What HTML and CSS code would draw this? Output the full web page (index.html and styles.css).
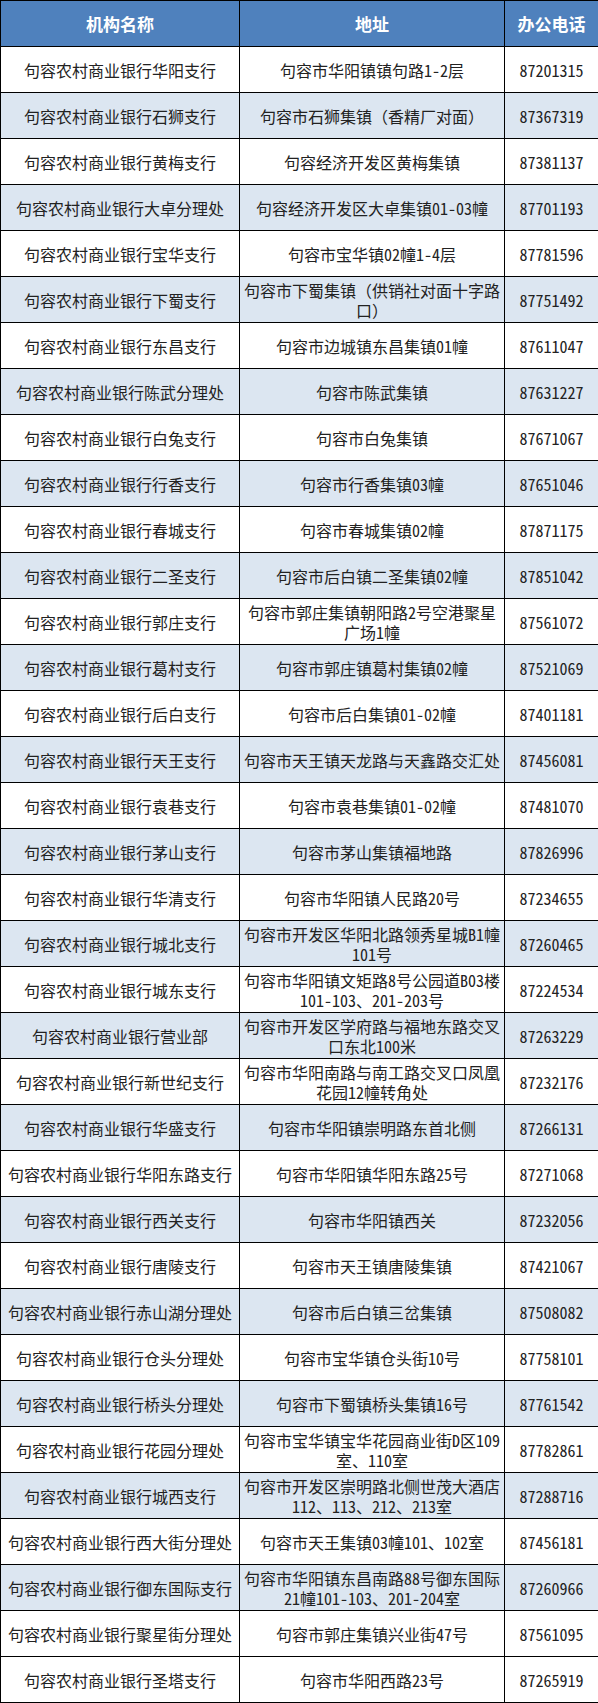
FILE: index.html
```html
<!DOCTYPE html>
<html lang="zh-CN">
<head>
<meta charset="utf-8">
<title>句容农村商业银行网点</title>
<link rel="stylesheet" href="styles.css">
</head>
<body>
<table class="branches">
  <colgroup>
    <col class="c-name">
    <col class="c-addr">
    <col class="c-tel">
  </colgroup>
  <thead>
    <tr><th>机构名称</th><th>地址</th><th>办公电话</th></tr>
  </thead>
  <tbody>
    <tr><td>句容农村商业银行华阳支行</td><td>句容市华阳镇镇句路1-2层</td><td class="tel">87201315</td></tr>
    <tr class="alt"><td>句容农村商业银行石狮支行</td><td>句容市石狮集镇（香精厂对面）</td><td class="tel">87367319</td></tr>
    <tr><td>句容农村商业银行黄梅支行</td><td>句容经济开发区黄梅集镇</td><td class="tel">87381137</td></tr>
    <tr class="alt"><td>句容农村商业银行大卓分理处</td><td>句容经济开发区大卓集镇01-03幢</td><td class="tel">87701193</td></tr>
    <tr><td>句容农村商业银行宝华支行</td><td>句容市宝华镇02幢1-4层</td><td class="tel">87781596</td></tr>
    <tr class="alt"><td>句容农村商业银行下蜀支行</td><td>句容市下蜀集镇（供销社对面十字路<br>口）</td><td class="tel">87751492</td></tr>
    <tr><td>句容农村商业银行东昌支行</td><td>句容市边城镇东昌集镇01幢</td><td class="tel">87611047</td></tr>
    <tr class="alt"><td>句容农村商业银行陈武分理处</td><td>句容市陈武集镇</td><td class="tel">87631227</td></tr>
    <tr><td>句容农村商业银行白兔支行</td><td>句容市白兔集镇</td><td class="tel">87671067</td></tr>
    <tr class="alt"><td>句容农村商业银行行香支行</td><td>句容市行香集镇03幢</td><td class="tel">87651046</td></tr>
    <tr><td>句容农村商业银行春城支行</td><td>句容市春城集镇02幢</td><td class="tel">87871175</td></tr>
    <tr class="alt"><td>句容农村商业银行二圣支行</td><td>句容市后白镇二圣集镇02幢</td><td class="tel">87851042</td></tr>
    <tr><td>句容农村商业银行郭庄支行</td><td>句容市郭庄集镇朝阳路2号空港聚星广场1幢</td><td class="tel">87561072</td></tr>
    <tr class="alt"><td>句容农村商业银行葛村支行</td><td>句容市郭庄镇葛村集镇02幢</td><td class="tel">87521069</td></tr>
    <tr><td>句容农村商业银行后白支行</td><td>句容市后白集镇01-02幢</td><td class="tel">87401181</td></tr>
    <tr class="alt"><td>句容农村商业银行天王支行</td><td>句容市天王镇天龙路与天鑫路交汇处</td><td class="tel">87456081</td></tr>
    <tr><td>句容农村商业银行袁巷支行</td><td>句容市袁巷集镇01-02幢</td><td class="tel">87481070</td></tr>
    <tr class="alt"><td>句容农村商业银行茅山支行</td><td>句容市茅山集镇福地路</td><td class="tel">87826996</td></tr>
    <tr><td>句容农村商业银行华清支行</td><td>句容市华阳镇人民路20号</td><td class="tel">87234655</td></tr>
    <tr class="alt"><td>句容农村商业银行城北支行</td><td>句容市开发区华阳北路领秀星城B1幢101号</td><td class="tel">87260465</td></tr>
    <tr><td>句容农村商业银行城东支行</td><td>句容市华阳镇文矩路8号公园道B03楼101-103、201-203号</td><td class="tel">87224534</td></tr>
    <tr class="alt"><td>句容农村商业银行营业部</td><td>句容市开发区学府路与福地东路交叉口东北100米</td><td class="tel">87263229</td></tr>
    <tr><td>句容农村商业银行新世纪支行</td><td>句容市华阳南路与南工路交叉口凤凰花园12幢转角处</td><td class="tel">87232176</td></tr>
    <tr class="alt"><td>句容农村商业银行华盛支行</td><td>句容市华阳镇崇明路东首北侧</td><td class="tel">87266131</td></tr>
    <tr><td>句容农村商业银行华阳东路支行</td><td>句容市华阳镇华阳东路25号</td><td class="tel">87271068</td></tr>
    <tr class="alt"><td>句容农村商业银行西关支行</td><td>句容市华阳镇西关</td><td class="tel">87232056</td></tr>
    <tr><td>句容农村商业银行唐陵支行</td><td>句容市天王镇唐陵集镇</td><td class="tel">87421067</td></tr>
    <tr class="alt"><td>句容农村商业银行赤山湖分理处</td><td>句容市后白镇三岔集镇</td><td class="tel">87508082</td></tr>
    <tr><td>句容农村商业银行仓头分理处</td><td>句容市宝华镇仓头街10号</td><td class="tel">87758101</td></tr>
    <tr class="alt"><td>句容农村商业银行桥头分理处</td><td>句容市下蜀镇桥头集镇16号</td><td class="tel">87761542</td></tr>
    <tr><td>句容农村商业银行花园分理处</td><td>句容市宝华镇宝华花园商业街D区109室、110室</td><td class="tel">87782861</td></tr>
    <tr class="alt"><td>句容农村商业银行城西支行</td><td>句容市开发区崇明路北侧世茂大酒店112、113、212、213室</td><td class="tel">87288716</td></tr>
    <tr><td>句容农村商业银行西大街分理处</td><td>句容市天王集镇03幢101、102室</td><td class="tel">87456181</td></tr>
    <tr class="alt"><td>句容农村商业银行御东国际支行</td><td>句容市华阳镇东昌南路88号御东国际21幢101-103、201-204室</td><td class="tel">87260966</td></tr>
    <tr><td>句容农村商业银行聚星街分理处</td><td>句容市郭庄集镇兴业街47号</td><td class="tel">87561095</td></tr>
    <tr><td>句容农村商业银行圣塔支行</td><td>句容市华阳西路23号</td><td class="tel">87265919</td></tr>
  </tbody>
</table>
</body>
</html>
```

FILE: styles.css
```css
html, body {
  margin: 0;
  padding: 0;
  background: #ffffff;
}

.branches {
  width: 598px;
  table-layout: fixed;
  border-collapse: collapse;
  font-family: "Noto Sans Mono CJK SC", "Noto Sans CJK SC", "DejaVu Sans", sans-serif;
  font-size: 16px;
  line-height: 20px;
  color: #222222;
  text-spacing-trim: space-all;
}

.c-name { width: 239px; }
.c-addr { width: 265px; }
.c-tel { width: 94px; }

.branches tr {
  height: 46px;
}

.branches th,
.branches td {
  border: 1px solid #000000;
  padding: 0 3px;
  text-align: center;
  vertical-align: middle;
  font-weight: normal;
}

.branches th {
  background: #4f81bd;
  color: #ffffff;
  font-family: "Noto Sans CJK SC", sans-serif;
  font-weight: bold;
  font-size: 17px;
}

.branches tr.alt td {
  background: #dce6f1;
}

.branches td.tel {
  padding: 0;
}
```
